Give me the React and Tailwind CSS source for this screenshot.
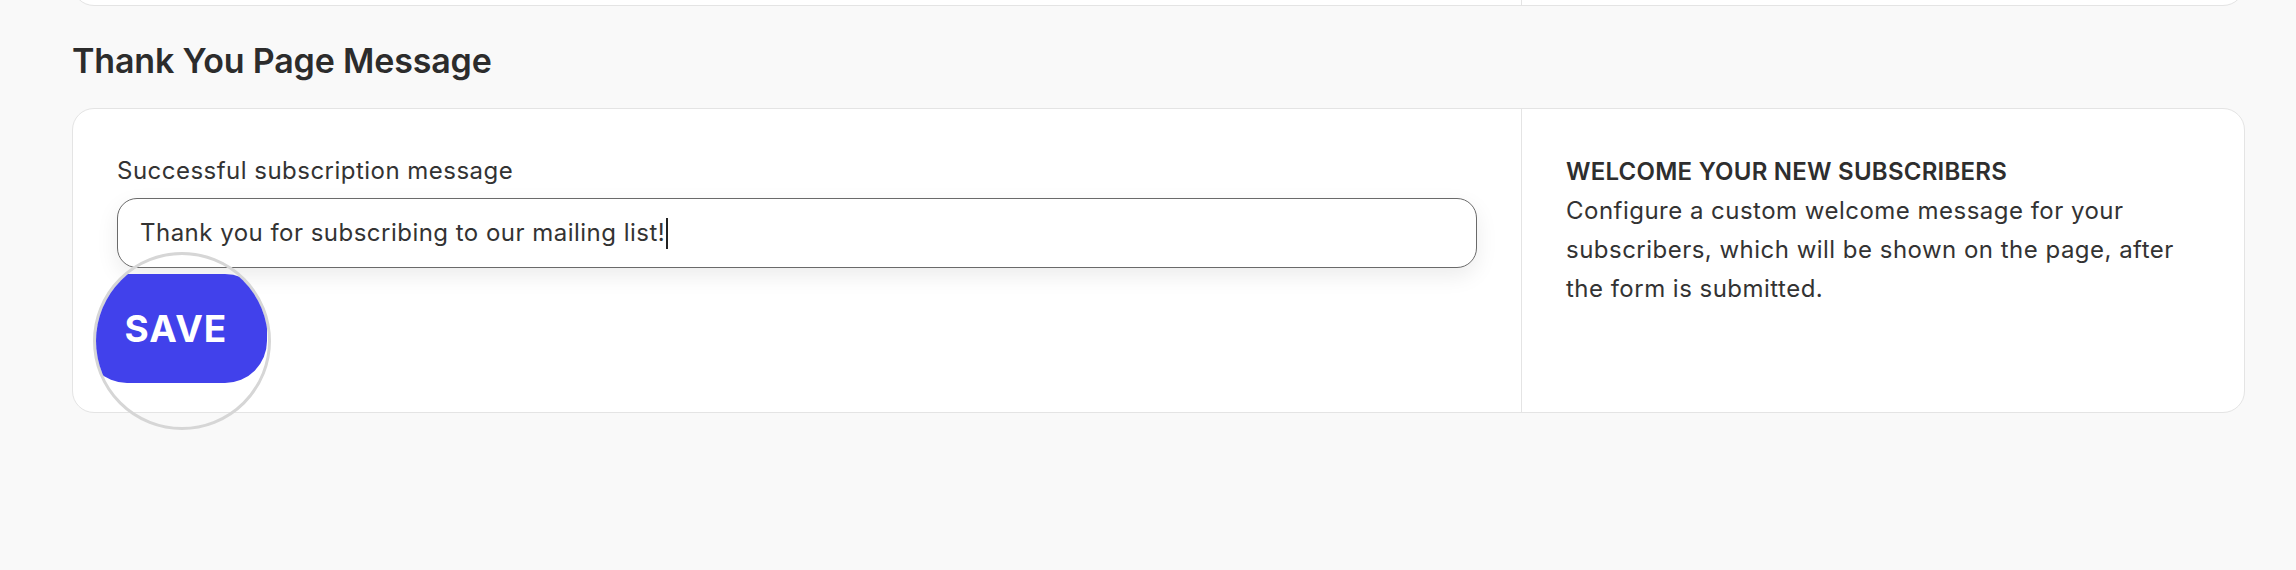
export default function App() {
  return (
    <div
      className="min-h-screen overflow-hidden bg-[#f9f9f9] pl-[72px] pr-[51px] text-[#333]"
      style={{ fontFamily: "Inter, 'Noto Sans', sans-serif" }}
    >
      {/* previous section, only its bottom edge shows */}
      <div className="-mt-[60px] flex h-[66px] rounded-[22px] border border-[#e4e4e4] bg-white">
        <div className="flex-1" />
        <div className="w-[723px] border-l border-[#e4e4e4]" />
      </div>

      <h2 className="mt-[35px] mb-[27px] text-[34px] leading-[40px] font-semibold tracking-[-0.005em] text-[#2c2c2c]">
        Thank You Page Message
      </h2>

      <div className="flex rounded-[22px] border border-[#e4e4e4] bg-white">
        <div className="flex-1 px-[44px] pt-[44px] pb-[44px]">
          <label className="block text-[24px] leading-[36px] tracking-[0.02em] text-[#333]">
            Successful subscription message
          </label>
          <div className="mt-[9px] flex h-[70px] items-center rounded-[20px] border border-[#6a6a6a] bg-white pl-[22px] text-[24px] tracking-[0.02em] text-[#333] shadow-[0_8px_22px_rgba(0,0,0,0.08)]">
            <span>Thank you for subscribing to our mailing list!</span>
            <span className="ml-[1px] h-[31px] w-[2px] bg-[#222]" />
          </div>

          <div className="relative h-[100px]">
            {/* magnified save button */}
            <div className="absolute -top-[16px] -left-[24px] h-[178px] w-[178px] overflow-hidden rounded-full border-[3px] border-[#d6d6d6]">
              <button className="absolute top-[19px] -left-[11px] flex h-[109px] w-[182px] items-center justify-center rounded-[42px] bg-[#4141eb] text-[37px] font-bold tracking-[0.03em] text-white">
                SAVE
              </button>
            </div>
          </div>
        </div>

        <div className="w-[723px] border-l border-[#e4e4e4] pt-[43px] pr-[44px] pl-[44px]">
          <p className="text-[24px] leading-[39px] font-semibold tracking-[0.01em] text-[#2e2e2e]">
            WELCOME YOUR NEW SUBSCRIBERS
          </p>
          <p className="text-[24px] leading-[39px] tracking-[0.02em] text-[#333]">
            Configure a custom welcome message for your subscribers, which will
            be shown on the page, after the form is submitted.
          </p>
        </div>
      </div>
    </div>
  );
}
